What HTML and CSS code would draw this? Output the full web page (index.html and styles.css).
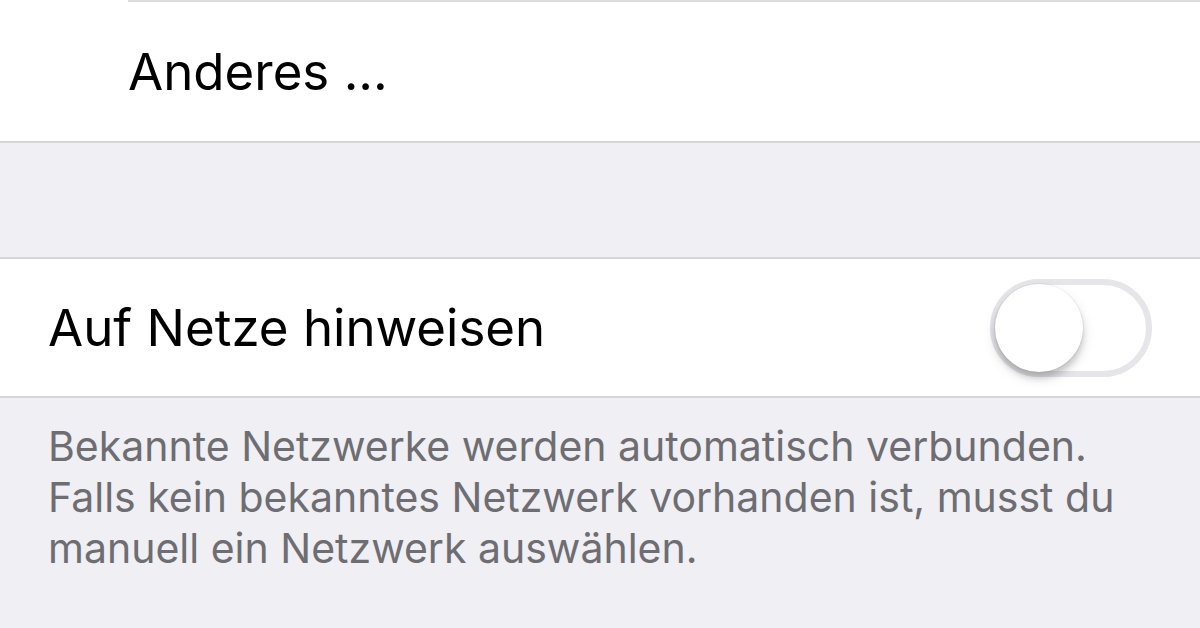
FILE: index.html
```html
<!DOCTYPE html>
<html lang="de">
<head>
<meta charset="utf-8">
<title>WLAN</title>
<link rel="stylesheet" href="styles.css">
</head>
<body>
  <div class="group">
    <div class="inset-sep"></div>
    <div class="cell cell-indented">
      <span class="label">Anderes ...</span>
    </div>
  </div>
  <div class="gap"></div>
  <div class="group">
    <div class="cell cell-toggle">
      <span class="label">Auf Netze hinweisen</span>
      <div class="switch">
        <div class="knob"></div>
      </div>
    </div>
  </div>
  <p class="footer">Bekannte Netzwerke werden automatisch verbunden. Falls kein bekanntes Netzwerk vorhanden ist, musst du manuell ein Netzwerk auswählen.</p>
</body>
</html>
```

FILE: styles.css
```css
html, body {
  margin: 0;
  padding: 0;
}

body {
  width: 1200px;
  height: 628px;
  overflow: hidden;
  background: #efeff4;
  font-family: Inter, "Liberation Sans", sans-serif;
  -webkit-font-smoothing: antialiased;
}

.group {
  background: #ffffff;
  border-bottom: 2px solid #d6d6da;
}

.group + .gap + .group {
  border-top: 2px solid #d6d6da;
}

.inset-sep {
  height: 2px;
  margin-left: 128px;
  background: #dcdcdf;
}

.cell {
  display: flex;
  align-items: center;
  justify-content: space-between;
}

.cell-indented {
  height: 139px;
  padding-left: 128px;
}

.cell-toggle {
  height: 137px;
  padding: 0 48px 0 48px;
}

.label {
  font-size: 51px;
  color: #000000;
}

.gap {
  height: 114px;
}

.switch {
  position: relative;
  width: 150px;
  height: 86px;
  border: 6px solid #e5e5ea;
  border-radius: 49px;
  background: #ffffff;
}

.knob {
  position: absolute;
  left: -1px;
  top: -1px;
  width: 88px;
  height: 88px;
  border-radius: 50%;
  background: #ffffff;
  box-shadow: 0 6px 6px rgba(0, 0, 0, 0.16), 0 6px 14px rgba(0, 0, 0, 0.12), 0 0 0 1px rgba(0, 0, 0, 0.04);
}

.footer {
  margin: 0;
  padding: 23px 48px 0 48px;
  font-size: 41px;
  line-height: 51px;
  color: #6d6d72;
}
```
